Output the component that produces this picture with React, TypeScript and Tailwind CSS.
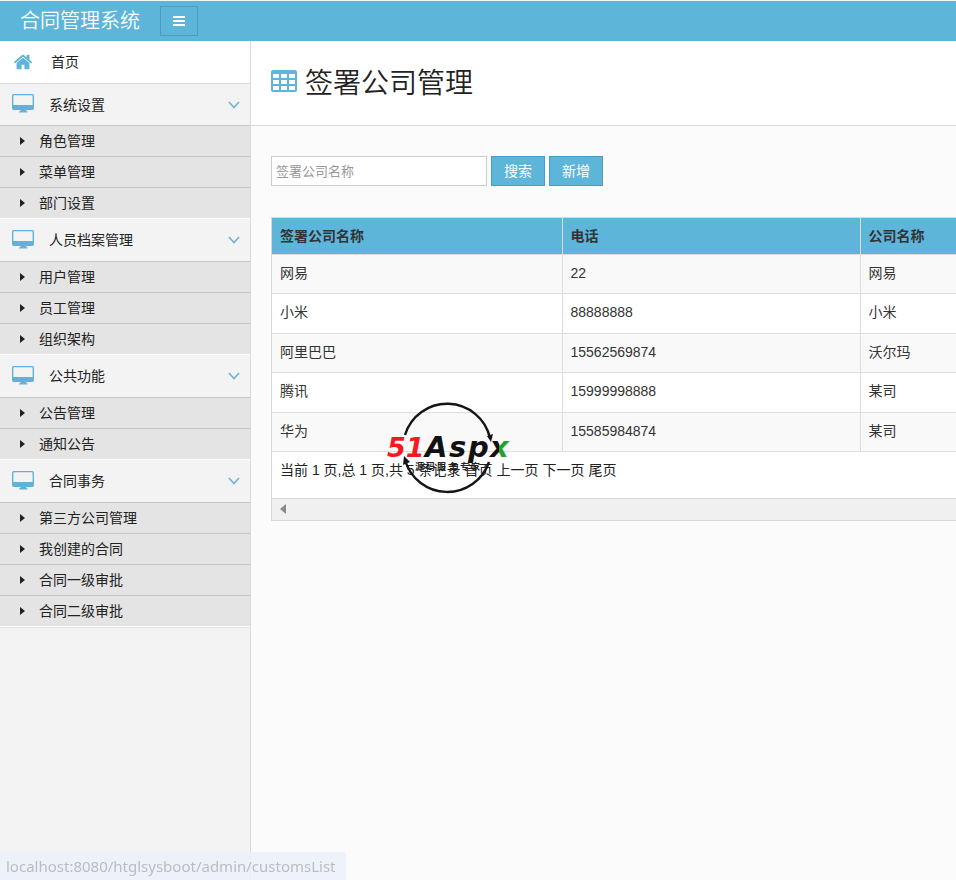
import { useState } from "react";

type MenuGroup = {
  title: string;
  items: string[];
};

const menuGroups: MenuGroup[] = [
  { title: "系统设置", items: ["角色管理", "菜单管理", "部门设置"] },
  { title: "人员档案管理", items: ["用户管理", "员工管理", "组织架构"] },
  { title: "公共功能", items: ["公告管理", "通知公告"] },
  {
    title: "合同事务",
    items: ["第三方公司管理", "我创建的合同", "合同一级审批", "合同二级审批"],
  },
];

const companies = [
  { sign: "网易", phone: "22", name: "网易" },
  { sign: "小米", phone: "88888888", name: "小米" },
  { sign: "阿里巴巴", phone: "15562569874", name: "沃尔玛" },
  { sign: "腾讯", phone: "15999998888", name: "某司" },
  { sign: "华为", phone: "15585984874", name: "某司" },
];

const pageLinks = ["首页", "上一页", "下一页", "尾页"];

function HomeIcon() {
  return (
    <svg className="w-5 h-5" viewBox="0 0 1792 1792" fill="currentColor" aria-hidden="true">
      <path d="M1472 992v480q0 26-19 45t-45 19h-384v-384h-256v384h-384q-26 0-45-19t-19-45v-480q0-1 .5-3t.5-3l575-474 575 474q1 2 1 6zm223-69l-62 74q-8 9-21 11h-3q-13 0-21-7l-692-577-692 577q-12 8-24 7-13-2-21-11l-62-74q-8-10-7-23.5t11-21.5l719-599q32-26 76-26t76 26l244 204v-195q0-14 9-23t23-9h192q14 0 23 9t9 23v408l219 182q10 8 11 21.5t-7 23.5z" />
    </svg>
  );
}

function DesktopIcon() {
  return (
    <svg className="w-[22px] h-[19px]" viewBox="0 0 22 19" fill="currentColor" aria-hidden="true">
      <path
        fillRule="evenodd"
        d="M1.800 0h18.400a1.800 1.800 0 0 1 1.800 1.800v12.400a1.800 1.800 0 0 1-1.800 1.800H14.200v1.200h.6a.8.8 0 0 1 .8.8v.6H7v-.6a.8.8 0 0 1 .8-.8h.6V16H1.800A1.800 1.800 0 0 1 0 14.200V1.800A1.800 1.800 0 0 1 1.800 0zM2 1.300a.6.6 0 0 0-.6.6V11h19.200V1.900a.6.6 0 0 0-.6-.6z"
      />
    </svg>
  );
}

function TableIcon() {
  return (
    <svg className="w-[26px] h-[22px]" viewBox="0 0 26 22" aria-hidden="true">
      <rect width="26" height="22" rx="2" fill="#5db5da" />
      <g fill="#fff">
        {[4, 10, 16].map((y) =>
          [2, 10, 18].map((x) => <rect key={`${x}-${y}`} x={x} y={y} width="6" height="4" />)
        )}
      </g>
    </svg>
  );
}

function AspxLogo() {
  return (
    <svg className="w-[130px] h-[96px]" viewBox="0 0 130 96" role="img" aria-label="51Aspx">
      <defs>
        <linearGradient id="xFill" x1="0" x2="1" y1="0" y2="0">
          <stop offset="0.5" stopColor="#111" />
          <stop offset="0.5" stopColor="#26a127" />
        </linearGradient>
      </defs>
      <g fill="none" stroke="#151515" strokeWidth="2.4">
        <path d="M18 34A44 44 0 0 1 103 37" />
        <path d="M18 59A44 44 0 0 0 102 61" />
      </g>
      <path d="M100 35l6-2-2 8z" fill="#151515" />
      <path d="M16 64l1-9 6 6z" fill="#151515" />
      <g
        fontFamily="'DejaVu Sans', sans-serif"
        fontWeight="bold"
        fontStyle="italic"
        fill="#111"
      >
        <text x="0" y="56" fontSize="27" fill="#f5191f">
          51
        </text>
        <text x="38" y="56" fontSize="29">
          A
        </text>
        <text x="62" y="56" fontSize="29">
          s
        </text>
        <text x="81" y="56" fontSize="29">
          p
        </text>
        <text x="103" y="56" fontSize="29" fill="url(#xFill)">
          x
        </text>
      </g>
      <text
        x="28 39 50 62 73 84"
        y="69"
        fontSize="9"
        fontWeight="bold"
        fontFamily="'Noto Sans CJK SC', sans-serif"
        fill="#222"
      >
        源码服务专家
      </text>
    </svg>
  );
}

function SidebarGroup({ group }: { group: MenuGroup }) {
  const [open, setOpen] = useState(true);

  return (
    <li className="group">
      <button
        type="button"
        onClick={() => setOpen(!open)}
        className="flex w-full h-[43px] group-first:h-[42px] items-center border-t border-white group-first:border-[#dcdcdc] pl-3 pr-2.5 text-left"
      >
        <span className="pb-0.5 text-[#62b1d6]">
          <DesktopIcon />
        </span>
        <span className="flex-1 pl-[15px]">{group.title}</span>
        <svg
          className="w-3 h-2 text-[#6fb3d2]"
          viewBox="0 0 12 8"
          fill="none"
          stroke="currentColor"
          strokeWidth={1.6}
          aria-hidden="true"
        >
          <path d="M1 1l5 5.500L11 1" />
        </svg>
      </button>
      {open && (
        <ul>
          {group.items.map((item) => (
            <li key={item} className="border-t border-[#c6c6c6] bg-[#e4e4e4]">
              <a href="#" className="flex h-[30px] items-center pl-5">
                <svg className="w-[5px] h-2" viewBox="0 0 5 8" fill="#222" aria-hidden="true">
                  <path d="M0 0l5 4-5 4z" />
                </svg>
                <span className="pl-3.5">{item}</span>
              </a>
            </li>
          ))}
        </ul>
      )}
    </li>
  );
}

export default function App() {
  const [keyword, setKeyword] = useState("");

  return (
    <div className="flex min-h-screen flex-col bg-[#fbfbfb] font-['Liberation_Sans','Noto_Sans_CJK_SC',sans-serif] text-sm text-[#222]">
      {/* Top bar */}
      <header className="flex h-[41px] items-center border-t border-[#eef6fa] bg-[#5db5da] pl-5 text-white">
        <span className="text-xl font-[350]">合同管理系统</span>
        <button
          type="button"
          aria-label="切换菜单"
          className="ml-5 flex h-[30px] w-[38px] items-center justify-center border border-[#4a9cc0]"
        >
          <svg className="w-3 h-2.5" viewBox="0 0 12 10" fill="currentColor" aria-hidden="true">
            <path d="M0 0h12v2H0zM0 4h12v2H0zM0 8h12v2H0z" />
          </svg>
        </button>
      </header>

      <div className="flex flex-1">
        {/* Sidebar */}
        <nav className="w-[251px] shrink-0 border-r border-[#dadada] bg-[#f3f3f3]">
          <a href="#" className="flex h-[42px] items-center bg-white pl-[13px]">
            <span className="text-[#5db5da]">
              <HomeIcon />
            </span>
            <span className="pl-[18px]">首页</span>
          </a>
          <ul className="border-b border-white">
            {menuGroups.map((group) => (
              <SidebarGroup key={group.title} group={group} />
            ))}
          </ul>
          <div className="border-t border-[#e2e2e2]" />
        </nav>

        <main className="min-w-0 flex-1">
          <div className="flex h-[85px] items-center gap-2 border-b border-[#d9d9d9] bg-white pl-5">
            <span className="pb-1">
              <TableIcon />
            </span>
            <h1 className="pt-0.5 text-[28px] leading-10 font-[350]">签署公司管理</h1>
          </div>

          <div className="pl-5 pt-[30px]">
            {/* Search form */}
            <form className="flex gap-1" onSubmit={(e) => e.preventDefault()}>
              <input
                type="text"
                aria-label="签署公司名称"
                value={keyword}
                onChange={(e) => setKeyword(e.target.value)}
                placeholder="签署公司名称"
                className="h-[30px] w-[216px] border border-[#ccc] bg-white px-1 text-[13px] placeholder:text-[#999]"
              />
              <button
                type="submit"
                className="h-[30px] w-[54px] border border-[#4a9cc0] bg-[#5db5da] text-white"
              >
                搜索
              </button>
              <button
                type="button"
                className="h-[30px] w-[54px] border border-[#4a9cc0] bg-[#5db5da] text-white"
              >
                新增
              </button>
            </form>

            {/* Company list */}
            <div className="relative mt-[31px] overflow-hidden border-y border-l border-[#d8d8d8] bg-white">
              <table className="w-[1200px] table-fixed border-collapse text-[#333]">
                <thead>
                  <tr className="h-9 bg-[#5db5da] text-left">
                    <th className="w-[290px] border-r border-[#ddd] px-2">签署公司名称</th>
                    <th className="w-[298px] border-r border-[#ddd] px-2">电话</th>
                    <th className="px-2">公司名称</th>
                  </tr>
                </thead>
                <tbody>
                  {companies.map((company) => (
                    <tr
                      key={company.phone}
                      className="h-[39px] even:h-10 border-y border-[#ddd] odd:bg-[#f9f9f9]"
                    >
                      <td className="border-r border-[#ddd] px-2 pb-0.5">{company.sign}</td>
                      <td className="border-r border-[#ddd] px-2 pb-0.5">{company.phone}</td>
                      <td className="px-2 pb-0.5">{company.name}</td>
                    </tr>
                  ))}
                </tbody>
              </table>

              <div className="flex h-[46px] gap-1 px-2 pt-2">
                <span>当前 1 页,总 1 页,共 5 条记录</span>
                {pageLinks.map((label) => (
                  <a key={label} href="#">
                    {label}
                  </a>
                ))}
              </div>

              <div className="flex h-[22px] items-center border-t border-[#d8d8d8] bg-[#f0f0f0] pl-2">
                <svg className="w-[6px] h-2.5" viewBox="0 0 6 10" fill="#8a8a8a" aria-hidden="true">
                  <path d="M6 0L0 5l6 5z" />
                </svg>
              </div>

              <div className="pointer-events-none absolute left-[115px] top-[183px]">
                <AspxLogo />
              </div>
            </div>
          </div>
        </main>
      </div>

      {/* Link target shown by the browser */}
      <div className="fixed bottom-0 left-0 flex h-7 items-center rounded-tr bg-[#ebf1fb]/80 pl-1.5 pr-2.5 pt-0.5 font-['Noto_Sans',sans-serif] text-[15px] text-[#bcbcbc]">
        localhost:8080/htglsysboot/admin/customsList
      </div>
    </div>
  );
}
